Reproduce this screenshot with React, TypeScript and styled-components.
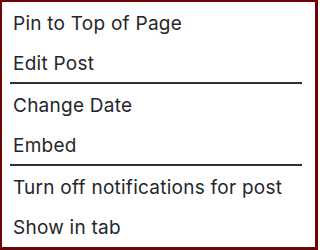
import React from "react";
import styled, { createGlobalStyle } from "styled-components";

const GlobalStyle = createGlobalStyle`
  html, body {
    margin: 0;
    padding: 0;
    background: #ffffff;
  }
`;

type Item = { label: string; dividerAfter?: boolean };

const items: Item[] = [
  { label: "Pin to Top of Page" },
  { label: "Edit Post", dividerAfter: true },
  { label: "Change Date" },
  { label: "Embed", dividerAfter: true },
  { label: "Turn off notifications for post" },
  { label: "Show in tab" },
];

const App = () => {
  return (
    <>
      <GlobalStyle />
      <StyledMenu>
        {items.map((item) => (
          <React.Fragment key={item.label}>
            <StyledItem>{item.label}</StyledItem>
            {item.dividerAfter && <StyledDivider />}
          </React.Fragment>
        ))}
      </StyledMenu>
    </>
  );
};

export default App;

const StyledMenu = styled.ul`
  box-sizing: border-box;
  width: 318px;
  height: 250px;
  margin: 0;
  padding: 0;
  list-style: none;
  background: #ffffff;
  border-style: solid;
  border-color: #6e0505;
  border-width: 2px 3px 3px 2px;
  display: flex;
  flex-direction: column;
  font-family: Inter, "Liberation Sans", sans-serif;
`;

const StyledItem = styled.li`
  height: 40px;
  display: flex;
  align-items: center;
  padding-left: 11px;
  padding-top: 3px;
  box-sizing: border-box;
  font-size: 19px;
  letter-spacing: 0.25px;
  color: #24262b;
`;

const StyledDivider = styled.li`
  height: 2px;
  margin: 0 13px 0 8px;
  background: #2c3038;
`;
